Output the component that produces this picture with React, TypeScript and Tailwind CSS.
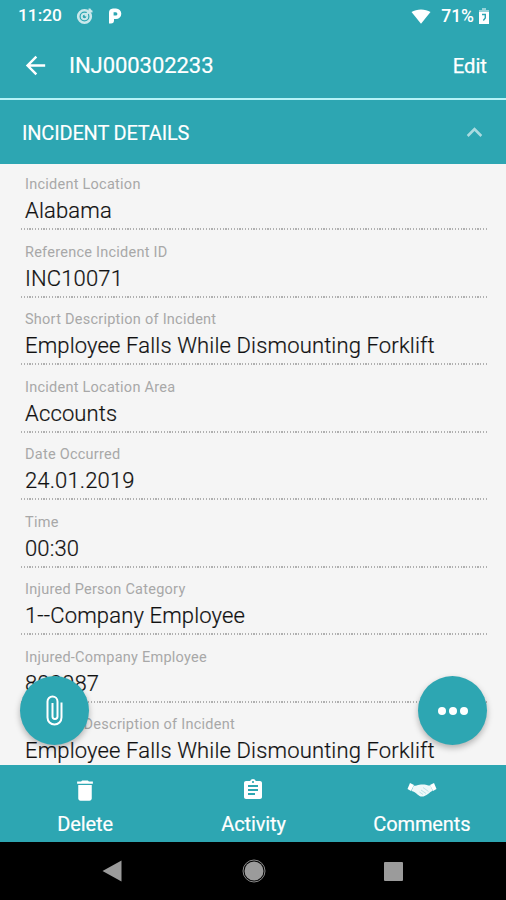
import React from "react";
import { MdArrowBack, MdAssignment, MdDelete, MdKeyboardArrowUp } from "react-icons/md";

interface Field {
  label: string;
  value: string;
}

const fields: Field[] = [
  { label: "Incident Location", value: "Alabama" },
  { label: "Reference Incident ID", value: "INC10071" },
  { label: "Short Description of Incident", value: "Employee Falls While Dismounting Forklift" },
  { label: "Incident Location Area", value: "Accounts" },
  { label: "Date Occurred", value: "24.01.2019" },
  { label: "Time", value: "00:30" },
  { label: "Injured Person Category", value: "1--Company Employee" },
  { label: "Injured-Company Employee", value: "800087" },
  { label: "Detailed Description of Incident", value: "Employee Falls While Dismounting Forklift" },
];

const StatusBar: React.FC = () => (
  <div className="flex h-8 items-center pl-[18px] pr-4 text-[17.3px] font-medium">
    <span>11:20</span>
    {/* Target notification */}
    <svg viewBox="0 0 18 18" className="ml-[14px] h-[18px] w-[18px] opacity-75" fill="none" stroke="currentColor">
      <circle cx="8.5" cy="9.5" r="6.3" strokeWidth="2.6" />
      <circle cx="8.5" cy="9.5" r="2.8" strokeWidth="2" />
      <path d="M9 9l6-6.5M13.5 1.5v3h3" strokeWidth="2" />
    </svg>
    {/* P notification */}
    <svg viewBox="0 0 14 16" className="ml-[14px] h-4 w-[14px]">
      <path
        d="M5 0.5h3a5.2 5.2 0 0 1 0 10.6H6V12.5a3 3 0 0 1-3 3H1V5a4.3 4.3 0 0 1 4-4.5zM5.6 4.3v3.2h2.2a1.6 1.6 0 0 0 0-3.200z"
        fill="currentColor"
        fillRule="evenodd"
      />
    </svg>
    <svg viewBox="0 0 20 15" className="ml-auto h-[15px] w-5">
      <path d="M0.5 3C5.5-.5 14.5-.5 19.5 3L10 14.7z" fill="currentColor" />
    </svg>
    <span className="ml-[10px] text-[17.5px]">71%</span>
    {/* Charging battery */}
    <svg viewBox="0 0 10 16" className="ml-[5px] mr-px h-4 w-[10px]">
      <path d="M3 0h4v2h3v3H0V2h3z" fill="currentColor" opacity="0.5" />
      <path d="M0 4h10v12H0z" fill="currentColor" />
      <path d="M3 6.5h4M6.3 6.5v3.5l-2 2.5" fill="none" stroke="#2da6b2" strokeWidth="1.4" />
    </svg>
  </div>
);

const HandshakeIcon: React.FC = () => (
  <svg viewBox="0 0 30 16" className="h-4 w-[30px]" fill="currentColor">
    <path d="M3 1l4 2-3 6-3.5-2z" />
    <path d="M27 1l-4 2 3 6 3.5-2z" />
    <path
      d="M6.8 3.5C9.5 4.2 11.5 2.5 14 2.500h3.500c2 0 3.500 1.500 5.900 1l2.300 5.200c-2.200.8-3.200 2.300-4.700 3.300-2 1.500-4 2.600-6 2.600s-3-1-4.500-2.200C8.500 11 7 9.500 4.500 9z"
      opacity="0.92"
    />
    <path d="M16 5.500l5.500 4M14 8l5 3.500M12.500 10l3.500 2.500" stroke="#2da6b2" strokeWidth="0.5" opacity="0.5" />
  </svg>
);

const FieldRow: React.FC<Field> = ({ label, value }) => (
  <div className="flex h-[67.5px] shrink-0 flex-col justify-end first:h-[66px]">
    <div className="pl-1 text-[14.5px] leading-[18px] tracking-[0.25px] text-[#a8a8a8]">{label}</div>
    <div className="mt-[3px] whitespace-nowrap pb-[3px] pl-1 text-[22px] font-light leading-[28px] tracking-[0.15px] text-[#111] [-webkit-text-stroke:0.2px_#111]">
      {value}
    </div>
    <div className="h-[2px] w-full bg-[repeating-linear-gradient(90deg,#b0b0b0_0_1.3px,transparent_1.3px_2.8px)]" />
  </div>
);

const App: React.FC = () => {
  const actions = [
    { name: "Delete", icon: <MdDelete className="h-[27px] w-[28px]" /> },
    { name: "Activity", icon: <MdAssignment className="h-6 w-6" /> },
    { name: "Comments", icon: <HandshakeIcon /> },
  ];

  return (
    <div className="flex h-[900px] w-[506px] flex-col overflow-hidden bg-[#f5f5f5] font-['Roboto',sans-serif]">
      {/* Header */}
      <header className="h-[98px] shrink-0 bg-[#2da6b2] text-white">
        <StatusBar />
        <div className="flex h-16 items-center pl-[21px] pr-[19px] pt-0.5">
          <MdArrowBack className="h-[29px] w-[29px]" />
          <h1 className="ml-[19px] text-[22px] tracking-[-0.05px] [-webkit-text-stroke:0.2px_white]">INJ000302233</h1>
          <button className="ml-auto pt-0.5 text-[20.3px] [-webkit-text-stroke:0.25px_white]">Edit</button>
        </div>
      </header>

      {/* Section title */}
      <div className="flex h-[66px] shrink-0 items-center justify-between border-t-2 border-[#b5f3f7] bg-[#2da6b2] pl-[22px] pr-4 text-white">
        <h2 className="pt-0.5 text-[20px] tracking-[-0.18px] [-webkit-text-stroke:0.15px_white]">INCIDENT DETAILS</h2>
        <MdKeyboardArrowUp className="h-[31px] w-[31px] opacity-60" />
      </div>

      {/* Fields */}
      <main className="relative flex h-[601px] shrink-0 flex-col overflow-hidden pl-[21px] pr-[17px]">
        {fields.map((field, index) => (
          <FieldRow key={index} label={field.label} value={field.value} />
        ))}
        <button className="absolute bottom-5 left-5 flex h-[69px] w-[69px] items-center justify-center rounded-full bg-[#2da6b2] text-white shadow-[0_3px_6px_rgba(0,0,0,0.28)]">
          <svg viewBox="0 0 17 31" className="h-[31px] w-[17px]" fill="none" stroke="currentColor" strokeWidth="2">
            <path d="M15.5 7.5v15a7 7 0 0 1-14 0V6.5a5 5 0 0 1 10 0v15a2.5 2.5 0 0 1-5 0V8" />
          </svg>
        </button>
        <button className="absolute bottom-5 right-[19px] flex h-[69px] w-[69px] items-center justify-center gap-[3px] rounded-full bg-[#2da6b2] shadow-[0_3px_6px_rgba(0,0,0,0.28)]">
          <span className="h-2 w-2 rounded-full bg-white" />
          <span className="h-2 w-2 rounded-full bg-white" />
          <span className="h-2 w-2 rounded-full bg-white" />
        </button>
      </main>

      {/* Bottom actions */}
      <footer className="grid h-[77px] shrink-0 grid-cols-3 bg-[#2da6b2] pl-px text-white">
        {actions.map((action) => (
          <button key={action.name} className="flex flex-col items-center">
            <span className="mt-3 flex h-[26px] items-center">{action.icon}</span>
            <span className="mt-[7px] text-[20px] leading-7 tracking-[-0.12px] [-webkit-text-stroke:0.2px_white]">
              {action.name}
            </span>
          </button>
        ))}
      </footer>

      {/* Android navigation */}
      <nav className="flex flex-1 items-center bg-black">
        <svg viewBox="0 0 20 22" className="ml-[102px] h-[22px] w-5">
          <path d="M19.5 0.5v21L0.5 11z" fill="#9b9b9b" />
        </svg>
        <svg viewBox="0 0 24 24" className="ml-[120px] h-6 w-6">
          <circle cx="12" cy="12" r="11" fill="none" stroke="#8a8a8a" strokeWidth="1" />
          <circle cx="12" cy="12" r="9.5" fill="#9b9b9b" />
        </svg>
        <span className="ml-[118px] h-[19px] w-[19px] rounded-[1px] bg-[#9b9b9b]" />
      </nav>
    </div>
  );
};

export default App;
